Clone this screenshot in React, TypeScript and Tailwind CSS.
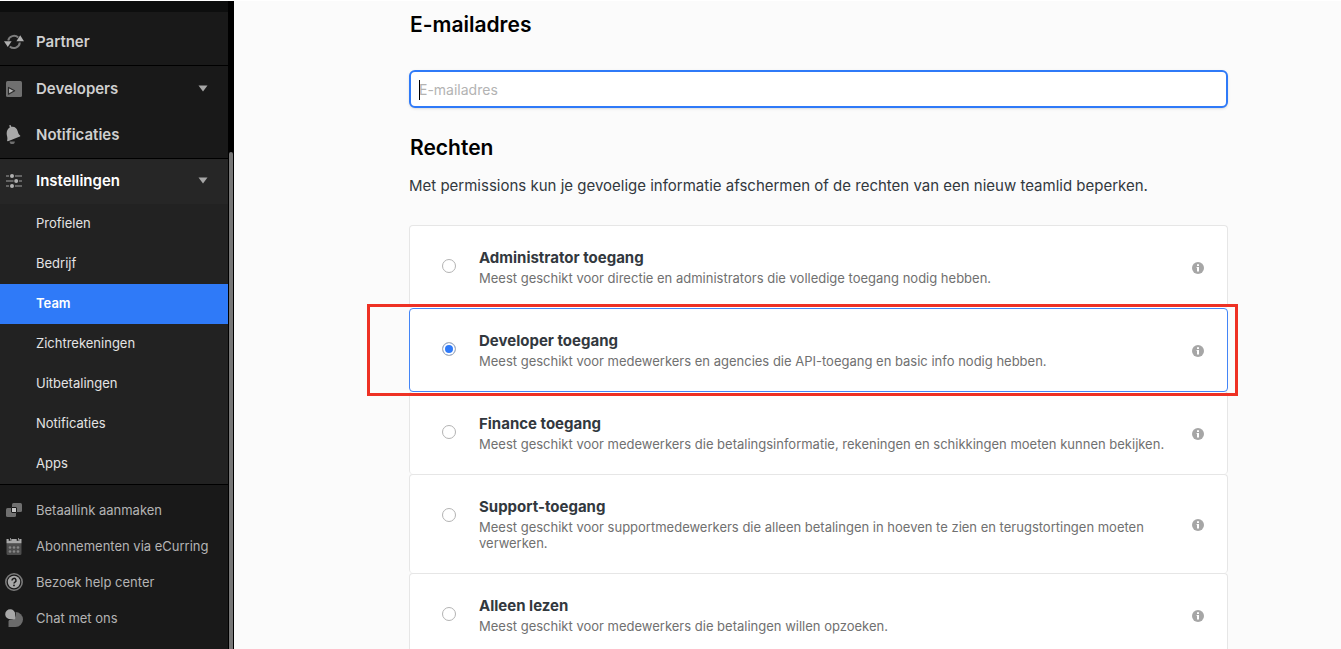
import { useState } from "react";
import clsx from "clsx";
import type { ReactNode } from "react";

type MenuItem = { label: string; icon: ReactNode };
type Role = { id: string; title: string; description: string; highlighted?: boolean };

const subItems = ["Profielen", "Bedrijf", "Team", "Zichtrekeningen", "Uitbetalingen", "Notificaties", "Apps"];

const roles: Role[] = [
  {
    id: "admin",
    title: "Administrator toegang",
    description: "Meest geschikt voor directie en administrators die volledige toegang nodig hebben.",
  },
  {
    id: "developer",
    title: "Developer toegang",
    description: "Meest geschikt voor medewerkers en agencies die API-toegang en basic info nodig hebben.",
    highlighted: true,
  },
  {
    id: "finance",
    title: "Finance toegang",
    description:
      "Meest geschikt voor medewerkers die betalingsinformatie, rekeningen en schikkingen moeten kunnen bekijken.",
  },
  {
    id: "support",
    title: "Support-toegang",
    description:
      "Meest geschikt voor supportmedewerkers die alleen betalingen in hoeven te zien en terugstortingen moeten verwerken.",
  },
  {
    id: "readonly",
    title: "Alleen lezen",
    description: "Meest geschikt voor medewerkers die betalingen willen opzoeken.",
  },
];

function PartnerIcon() {
  return (
    <svg width="20" height="18" viewBox="0 0 20 18" fill="none" aria-hidden="true">
      <path d="M4.200 7.500a6 6 0 0 1 10-3" stroke="#7d7d7d" strokeWidth="2" />
      <path d="M15.800 9.500a6 6 0 0 1-10 4" stroke="#7d7d7d" strokeWidth="2" />
      <path d="M16.200 2.300 20 8.200h-7.600z" fill="#b0b0b0" />
      <path d="M3.800 14 0 8.200h7.600z" fill="#b0b0b0" />
    </svg>
  );
}

function DevelopersIcon() {
  return (
    <svg width="16" height="16" viewBox="0 0 16 16" aria-hidden="true">
      <rect width="16" height="16" rx="1.500" fill="#707070" />
      <path d="M2.500 6.400 8.600 9.800l-6.100 3.400z" fill="#b5b5b5" stroke="#2b2b2b" strokeWidth="1.200" strokeLinejoin="round" />
    </svg>
  );
}

function BellIcon() {
  return (
    <svg width="16" height="20" viewBox="0 0 16 20" aria-hidden="true">
      <path d="M3.600 16.500h5.200a2.600 2.600 0 0 1-5.200 0z" fill="#6f6f6f" />
      <path
        d="M3.300.6a.8.8 0 0 1 1.500-.2l.5 1.400c3.300-.6 5.500 1.300 6.300 4.200.8 2.800 1.300 3.500 2.500 4.500.4.400.3.900-.2 1.100L2 16.200c-.6.200-1-.2-.9-.8.500-1.800.300-3-.2-5C.2 7 1 4 3.800 2.400z"
        fill="#a8a8a8"
      />
    </svg>
  );
}

function SettingsIcon() {
  return (
    <svg width="16" height="16" viewBox="0 0 16 16" aria-hidden="true">
      <g stroke="#7a7a7a" strokeWidth="1.400">
        <path d="M0 3h3M9 3h7M0 8h7.500M13 8h3M0 13h3M9 13h7" />
      </g>
      <g fill="#b0b0b0">
        <circle cx="6" cy="3" r="2" />
        <circle cx="10.200" cy="8" r="2" />
        <circle cx="6" cy="13" r="2" />
      </g>
    </svg>
  );
}

function LinkIcon() {
  return (
    <svg width="16" height="14" viewBox="0 0 16 14" aria-hidden="true">
      <rect x="6" y="0" width="10" height="9" rx="1.500" fill="#6f6f6f" />
      <rect x="0" y="5" width="10" height="9" rx="1.500" fill="#6f6f6f" />
      <rect x="5.500" y="4.500" width="5" height="5" rx=".5" fill="#c8c8c8" stroke="#191919" />
    </svg>
  );
}

function CalendarIcon() {
  return (
    <svg width="16" height="17" viewBox="0 0 16 17" aria-hidden="true">
      <path d="M.5 6h15v9.500a1.500 1.500 0 0 1-1.500 1.500H2a1.500 1.500 0 0 1-1.500-1.500z" fill="#4d4d4d" />
      <path d="M.5 1h15v4.500H.5z" fill="#a8a8a8" />
      <path d="M4 0v2.700M12 0v2.700" stroke="#191919" strokeWidth="2.600" />
      <path d="M4.500 0v2.500M12.500 0v2.500" stroke="#a8a8a8" strokeWidth=".8" />
      <g fill="#858585">
        <circle cx="4" cy="9.500" r="1.300" />
        <circle cx="8" cy="9.500" r="1.300" />
        <circle cx="12" cy="9.500" r="1.300" />
        <circle cx="4" cy="13.500" r="1.300" />
        <circle cx="8" cy="13.500" r="1.300" />
        <circle cx="12" cy="13.500" r="1.300" />
      </g>
    </svg>
  );
}

function HelpIcon() {
  return (
    <svg width="18" height="18" viewBox="0 0 18 18" fill="none" aria-hidden="true">
      <circle cx="9" cy="9" r="8.200" stroke="#7a7a7a" strokeWidth="1.600" />
      <circle cx="9" cy="9" r="6.200" fill="#a8a8a8" />
      <path d="M7 7.400a2 2 0 1 1 3 1.700c-.7.400-1 .7-1 1.400" stroke="#191919" strokeWidth="1.500" />
      <circle cx="9" cy="12.400" r=".9" fill="#191919" />
    </svg>
  );
}

function ChatIcon() {
  return (
    <svg width="18" height="18" viewBox="0 0 18 18" aria-hidden="true">
      <path d="M10.500 3A7.500 7.500 0 1 1 10.500 18H3.500v-6z" fill="#6b6b6b" />
      <circle cx="5.200" cy="5.200" r="5.800" fill="#191919" />
      <path d="M5.200.200a5 5 0 0 1 5 5v5h-5a5 5 0 0 1 0-10z" fill="#a8a8a8" />
    </svg>
  );
}

function InfoIcon() {
  return (
    <svg width="12" height="12" viewBox="0 0 12 12" aria-hidden="true">
      <circle cx="6" cy="6" r="6" fill="#a6a6a6" />
      <path d="M5 2.300h2v1.600H5zM4.600 4.900H7v4.600H5V6h-.4z" fill="#fff" />
    </svg>
  );
}

function Caret() {
  return (
    <svg width="10" height="7" viewBox="0 0 10 7" className="mr-5 mb-0.5 ml-auto" aria-hidden="true">
      <path d="M.5.500h9L5 6.500z" fill="#a6a6a6" />
    </svg>
  );
}

const footerItems: MenuItem[] = [
  { label: "Betaallink aanmaken", icon: <LinkIcon /> },
  { label: "Abonnementen via eCurring", icon: <CalendarIcon /> },
  { label: "Bezoek help center", icon: <HelpIcon /> },
  { label: "Chat met ons", icon: <ChatIcon /> },
];

function IconSlot({ children }: { children: ReactNode }) {
  return <span className="mr-3 mb-0.5 ml-1 flex w-5 shrink-0 justify-center">{children}</span>;
}

function Sidebar() {
  const [open, setOpen] = useState(true);

  return (
    <aside className="flex shrink-0 bg-black">
      <nav className="flex w-[228px] flex-col bg-[#191919] text-[15px] font-semibold text-[#cfcfcf]">
        <div className="h-[11px] bg-[#0d0e0e]" />
        <a href="#partner" className="flex h-[54px] items-center border-b border-black pt-2">
          <IconSlot><PartnerIcon /></IconSlot>
          Partner
        </a>
        <button type="button" className="flex h-[47px] items-center text-left">
          <IconSlot><DevelopersIcon /></IconSlot>
          Developers
          <Caret />
        </button>
        <a href="#notificaties" className="flex h-[46px] items-center border-b border-black">
          <IconSlot><BellIcon /></IconSlot>
          Notificaties
        </a>
        <button
          type="button"
          className="flex h-[45px] items-center bg-[#262626] text-left text-white"
          aria-expanded={open}
          onClick={() => setOpen(!open)}
        >
          <IconSlot><SettingsIcon /></IconSlot>
          Instellingen
          <Caret />
        </button>
        {open && (
          <ul className="border-b border-black bg-[#222222] text-[13px] font-normal text-[#e4e4e4]">
            {subItems.map((item) => (
              <li key={item}>
                <a
                  href={`#${item.toLowerCase()}`}
                  className={clsx(
                    "flex h-10 items-center pl-9",
                    item === "Team" && "bg-[#2f7af8] font-semibold text-white"
                  )}
                >
                  {item}
                </a>
              </li>
            ))}
          </ul>
        )}
        <ul className="pt-2 text-[13px] font-normal text-[#b4b4b4]">
          {footerItems.map((item) => (
            <li key={item.label}>
              <a href="#" className="flex h-9 items-center whitespace-nowrap">
                <IconSlot>{item.icon}</IconSlot>
                {item.label}
              </a>
            </li>
          ))}
        </ul>
      </nav>
      {/* Scrollbar */}
      <div className="flex w-[6px] flex-col px-px pt-[151px]">
        <div className="flex-1 rounded-t-full bg-[#777777]" />
      </div>
    </aside>
  );
}

function RoleOption({ role, checked, onSelect }: { role: Role; checked: boolean; onSelect: () => void }) {
  return (
    <div className="relative">
      <label
        className={clsx(
          "flex rounded border bg-white pt-[22px] pr-[23px] pb-[22px] pl-8",
          checked ? "relative z-[1] -mb-px border-[#4385f7]" : "border-b-0 border-[#e6e6e6]"
        )}
      >
        <input
          type="radio"
          name="role"
          className="mt-[11px] size-[14px] shrink-0 appearance-none rounded-full border border-[#b3b3b3] bg-white checked:bg-[#2f7af8] checked:shadow-[inset_0_0_0_2px_#fff]"
          checked={checked}
          onChange={onSelect}
        />
        <span className="ml-[23px] min-w-0 flex-1">
          <span className="block text-[15px] leading-5 font-bold text-[#32383e]">{role.title}</span>
          <span className="mt-0.5 block text-[13px] leading-4 text-[#707070]">{role.description}</span>
        </span>
        <span className="ml-2 flex shrink-0 items-center pt-0.5">
          <InfoIcon />
        </span>
      </label>
      {role.highlighted && (
        <div className="pointer-events-none absolute -top-1 -right-[10px] -bottom-1 -left-[42px] z-10 border-3 border-[#ee3124]" />
      )}
    </div>
  );
}

export default function App() {
  const [email, setEmail] = useState("");
  const [selected, setSelected] = useState("developer");

  return (
    <div className="flex h-screen overflow-hidden border-t border-white bg-[#fbfbfb] font-['Inter',sans-serif]">
      <Sidebar />
      <main className="min-w-0 flex-1 pt-2 pr-[113px] pl-[175px]">
        <label htmlFor="email" className="block pl-px text-[21px] leading-8 font-semibold text-black">
          E-mailadres
        </label>
        <div className="relative mt-[29px]">
          <input
            id="email"
            type="email"
            placeholder="E-mailadres"
            className="block h-[38px] w-full rounded-md border-2 border-[#2f7af8] bg-white px-2 text-sm text-[#32383e] shadow-sm outline-none placeholder:text-[#b3b3b3]"
            value={email}
            onChange={(e) => setEmail(e.target.value)}
          />
          {!email && <span className="absolute top-[10px] left-[10px] h-5 w-px bg-black" />}
        </div>
        <h2 className="mt-6 pl-px text-[21px] leading-8 font-semibold text-black">Rechten</h2>
        <p className="mt-[10px] text-[15px] leading-6 text-[#32383e]">
          Met permissions kun je gevoelige informatie afschermen of de rechten van een nieuw teamlid beperken.
        </p>
        <div className="mt-[27px]" role="radiogroup" aria-label="Rechten">
          {roles.map((role) => (
            <RoleOption
              key={role.id}
              role={role}
              checked={selected === role.id}
              onSelect={() => setSelected(role.id)}
            />
          ))}
        </div>
      </main>
    </div>
  );
}
